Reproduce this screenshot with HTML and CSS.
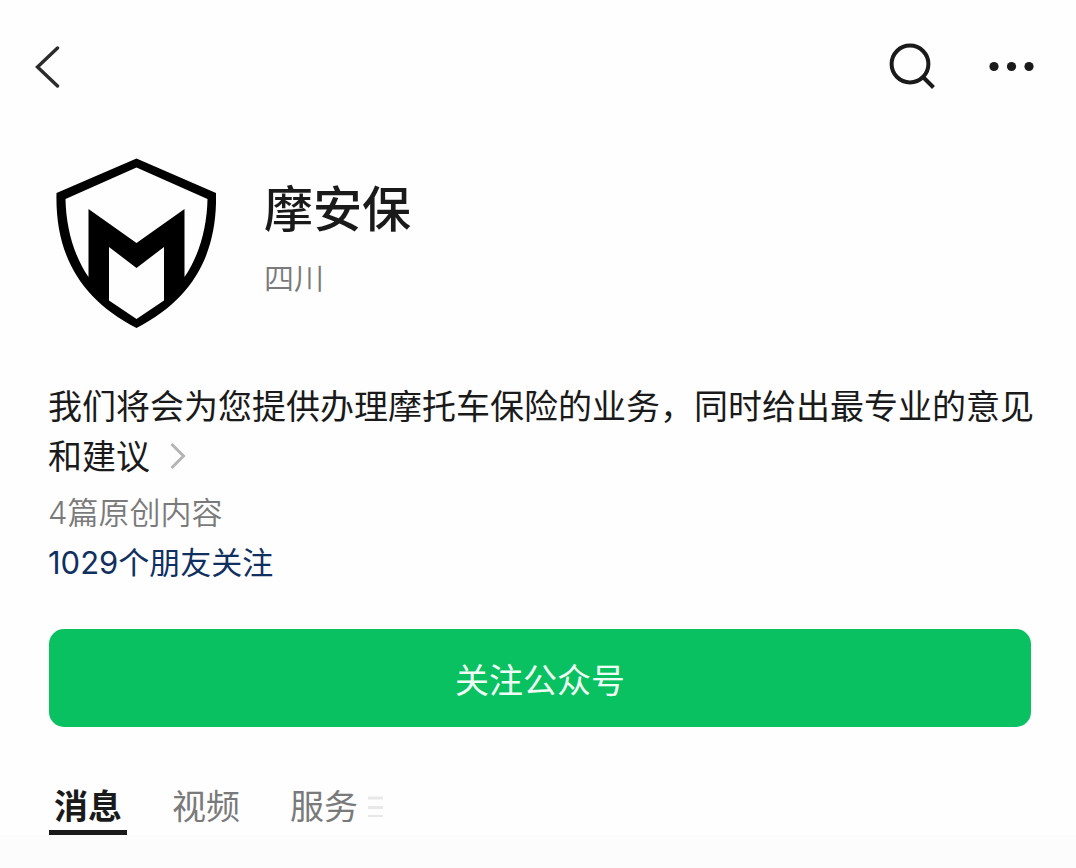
FILE: index.html
```html
<!DOCTYPE html>
<html lang="zh-CN">
<head>
<meta charset="utf-8">
<meta name="viewport" content="width=device-width, initial-scale=1">
<title>摩安保</title>
<link rel="stylesheet" href="styles.css">
</head>
<body>
<header class="topbar">
  <button class="icon-button" type="button" aria-label="返回">
    <svg width="28" height="44" viewBox="0 0 28 44" fill="none" stroke="#2b2b2b" stroke-width="3.4" stroke-linecap="round"><path d="M23.500 4 3.500 23l20 19"/></svg>
  </button>
  <div class="topbar-actions">
    <button class="icon-button" type="button" aria-label="搜索">
      <svg width="48" height="48" viewBox="0 0 48 48" fill="none" stroke="#1a1a1a" stroke-width="4"><circle cx="22" cy="22" r="18.4"/><path d="m35 35 10.500 10.500"/></svg>
    </button>
    <button class="icon-button" type="button" aria-label="更多">
      <svg width="46" height="48" viewBox="0 0 46 48" fill="#1a1a1a"><circle cx="5" cy="24.500" r="4.6"/><circle cx="22.500" cy="24.500" r="4.6"/><circle cx="40" cy="24.500" r="4.6"/></svg>
    </button>
  </div>
</header>
<main>
  <section class="profile">
    <svg class="logo" width="160" height="170" viewBox="0 0 160 170" role="img" aria-label="摩安保">
      <path fill="#000" fill-rule="evenodd" d="M80.500 .5 160 35C161.500 96 137 141 80.500 170C24 141-1 96 .5 35ZM80.500 9.500 9.500 41C10 70 18 98 32.500 119V51L80.500 85 128.500 51V119C143 98 151 70 151.500 41ZM53 89V142.500L80.500 161 108 142.500V89L80.500 110Z"/>
    </svg>
    <div class="identity">
      <h1 class="name">摩安保</h1>
      <p class="region">四川</p>
    </div>
  </section>
  <section class="about">
    <p class="description">我们将会为您提供办理摩托车保险的业务，同时给出最专业的意见和建议<svg class="chevron" width="16" height="28" viewBox="0 0 16 28" fill="none" stroke="#b5b5b5" stroke-width="3"><path d="m1.500 2 12 12-12 12"/></svg></p>
    <p class="originals">4篇原创内容</p>
    <a class="friends" href="#friends">1029个朋友关注</a>
  </section>
  <button class="follow" type="button">关注公众号</button>
  <nav class="tabs">
    <a class="tab tab-active" href="#messages" aria-current="page">消息</a>
    <a class="tab" href="#videos">视频</a>
    <a class="tab" href="#services">服务<svg class="menu-mark" width="16" height="22" viewBox="0 0 16 22" stroke="#e8e8e8" stroke-width="3"><path d="M0 2h15M0 11.500h15"/><path stroke-width="2" d="M0 20h15"/></svg></a>
  </nav>
</main>
<div class="feed"></div>
</body>
</html>
```
FILE: styles.css
```css
* {
  box-sizing: border-box;
}

body {
  margin: 0;
  min-height: 100vh;
  display: flex;
  flex-direction: column;
  background: #fefefe;
  color: #1a1a1a;
  font-family: Inter, "Noto Sans CJK SC", sans-serif;
  font-size: 34px;
}

h1,
p {
  margin: 0;
}

a {
  color: inherit;
  text-decoration: none;
}

button {
  border: 0;
  font: inherit;
  cursor: pointer;
}

svg {
  flex: none;
}

.topbar {
  display: flex;
  align-items: center;
  justify-content: space-between;
  padding: 42px 41px 0 34px;
}

.topbar-actions {
  display: flex;
  gap: 53px;
}

.icon-button {
  display: flex;
  padding: 0;
  background: none;
}

.profile {
  display: flex;
  gap: 48px;
  padding: 68px 48px 0 56px;
}

.identity {
  padding-top: 20px;
}

.name {
  font-size: 49px;
  font-weight: 500;
  line-height: 64px;
}

.region {
  margin-top: 16px;
  color: #7a7a7a;
  font-size: 30px;
  font-weight: 350;
  line-height: 40px;
}

.about {
  padding: 54px 41px 0 48px;
  line-height: 50px;
}

.chevron {
  margin-left: 20px;
  vertical-align: -1px;
}

.originals {
  margin-top: 6px;
  color: #7a7a7a;
  font-size: 31px;
  font-weight: 350;
}

.friends {
  display: block;
  width: fit-content;
  color: #10305f;
  font-size: 31px;
}

.follow {
  display: block;
  width: calc(100% - 94px);
  height: 98px;
  margin: 41px 45px 0 49px;
  border-radius: 15px;
  background: #09c160;
  color: #effff5;
}

.tabs {
  display: flex;
  gap: 40px;
  padding: 56px 49px 0;
  color: #7a7a7a;
  line-height: 47px;
}

.tab {
  display: flex;
  align-items: center;
  padding: 0 5px;
  border-bottom: 5px solid transparent;
}

.tab-active {
  border-color: #1a1a1a;
  color: #1a1a1a;
  font-weight: 700;
}

.menu-mark {
  margin-left: 10px;
}

.feed {
  flex: 1;
  background: #fcfcfc;
}
```
